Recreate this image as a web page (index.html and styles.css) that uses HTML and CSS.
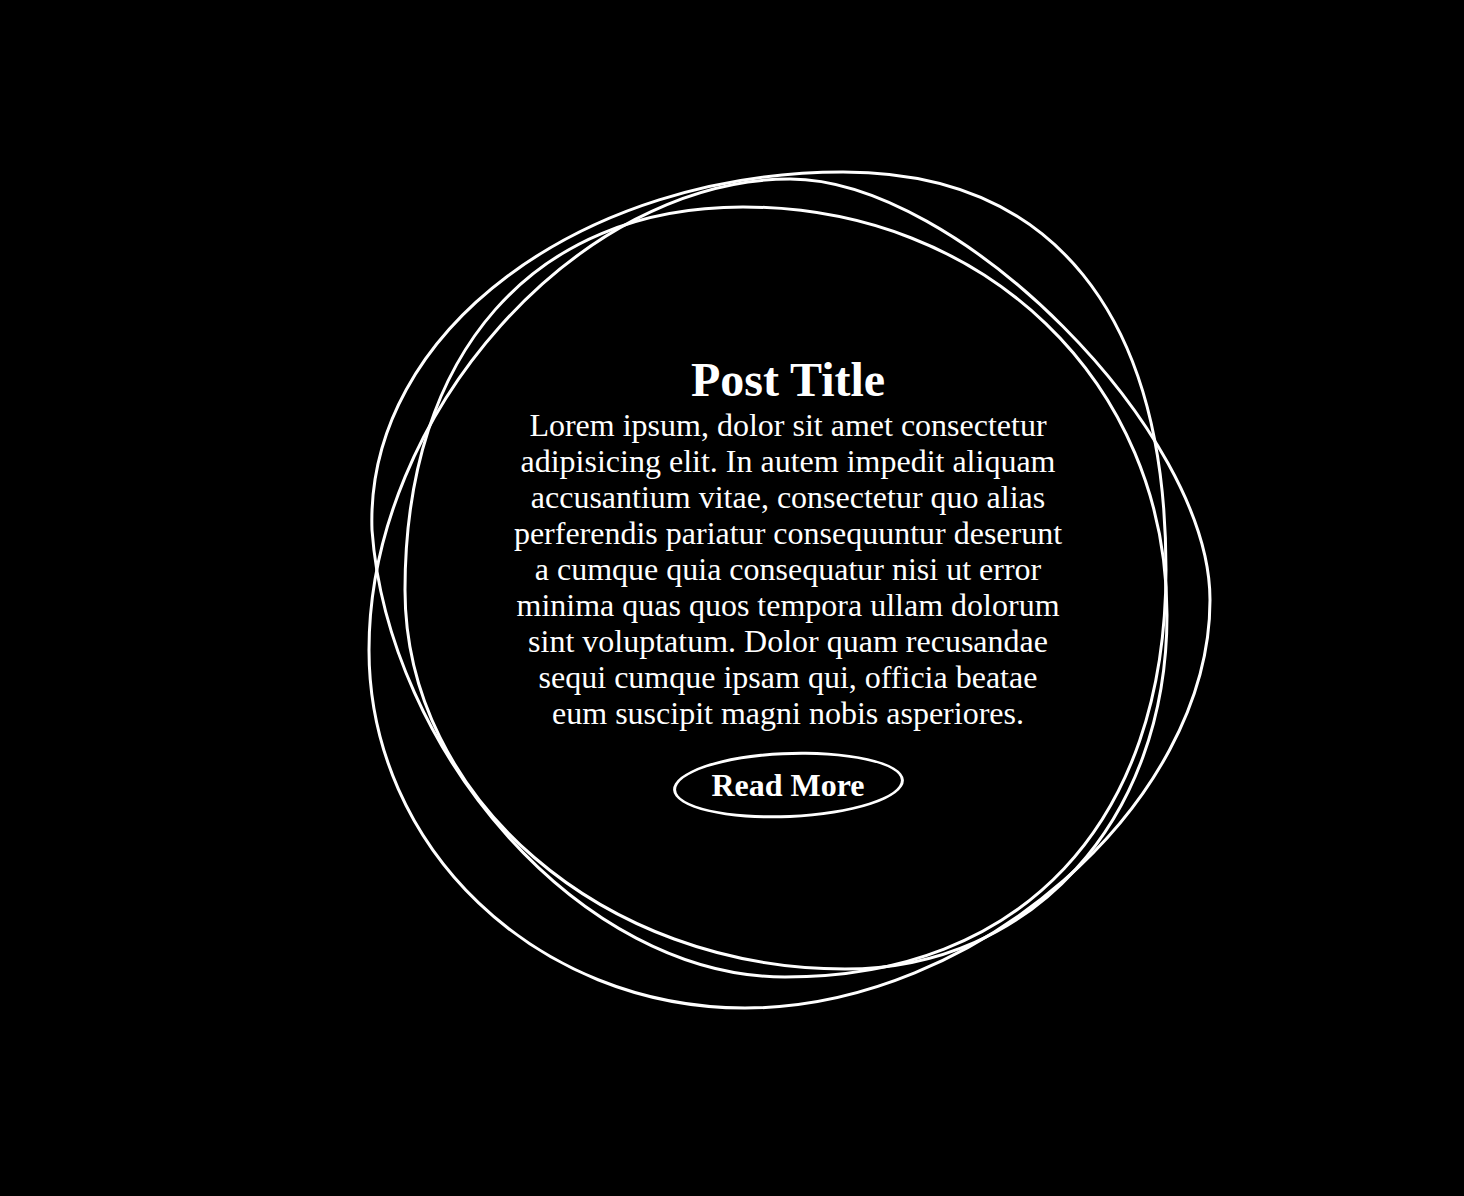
FILE: index.html
```html
<!DOCTYPE html>
<html lang="en">
<head>
<meta charset="utf-8">
<title>Post</title>
<link rel="stylesheet" href="styles.css">
</head>
<body>
<main class="stage">
  <article class="card">
    <svg class="rings" viewBox="358 160 860 860" aria-hidden="true">
      <path d="M843 172 C1052 172 1166 313 1166 570 C1166 824 1021 977 785 977 C580 977 388 750 372 530 C365 330 584 172 843 172 Z"/>
      <path d="M790 179 C958 179 1210 432 1210 600 C1210 804 975 1008 745 1008 C536 1008 369 847 369 650 C369 414 579 179 790 179 Z"/>
      <path d="M743 207 C985 207 1167 382 1167 615 C1167 820 1032 969 845 969 C603 969 405 798 405 590 C405 353 533 207 743 207 Z"/>
    </svg>
    <div class="content">
      <h2 class="title">Post Title</h2>
      <p class="text">Lorem ipsum, dolor sit amet consectetur adipisicing elit. In autem impedit aliquam accusantium vitae, consectetur quo alias perferendis pariatur consequuntur deserunt a cumque quia consequatur nisi ut error minima quas quos tempora ullam dolorum sint voluptatum. Dolor quam recusandae sequi cumque ipsam qui, officia beatae eum suscipit magni nobis asperiores.</p>
      <a class="more" href="#">Read More</a>
    </div>
  </article>
</main>
</body>
</html>
```
FILE: styles.css
```css
html, body {
  margin: 0;
  background: #000;
}
body {
  font-family: "Liberation Serif", "Times New Roman", serif;
  color: #fff;
  min-height: 1196px;
}
.stage {
  padding: 160px 0 0 358px;
}
.card {
  position: relative;
  width: 860px;
  height: 860px;
}
.rings {
  position: absolute;
  inset: 0;
  width: 100%;
  height: 100%;
  fill: none;
  stroke: #fff;
  stroke-width: 3;
}
.content {
  position: relative;
  display: flex;
  flex-direction: column;
  align-items: center;
  padding-top: 196px;
}
.title {
  margin: 0;
  font-size: 48px;
  line-height: 48px;
  font-weight: bold;
}
.text {
  margin: 3px 0 0;
  width: 560px;
  font-size: 32px;
  line-height: 36px;
  text-align: center;
}
.more {
  position: relative;
  margin-top: 21px;
  box-sizing: border-box;
  width: 231px;
  height: 66px;
  display: flex;
  align-items: center;
  justify-content: center;
  color: #fff;
  text-decoration: none;
  font-size: 32px;
  font-weight: bold;
}
.more::before {
  content: "";
  position: absolute;
  inset: 0;
  border: 3px solid #fff;
  border-radius: 48% 52% 50% 50% / 50% 50% 50% 50%;
  transform: rotate(-2.5deg);
}
```
